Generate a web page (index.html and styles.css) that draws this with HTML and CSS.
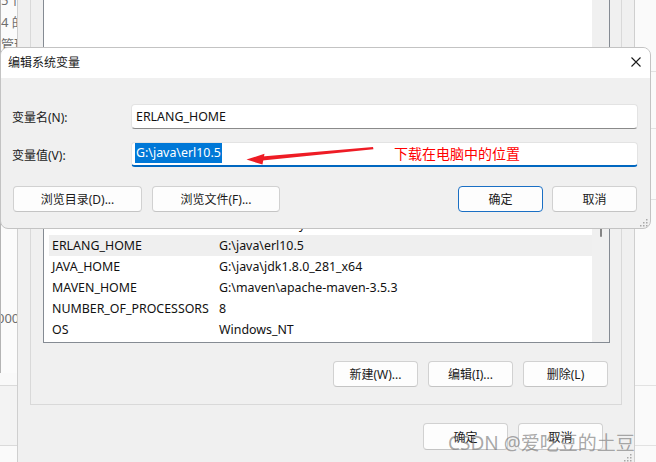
FILE: index.html
```html
<!DOCTYPE html>
<html lang="zh-CN">
<head>
    <meta charset="UTF-8">
    <meta name="viewport" content="width=device-width, initial-scale=1.0">
    <title>编辑系统变量</title>
    <link rel="stylesheet" href="styles.css">
</head>
<body>
    <div class="desk">
        <!-- Janela de trás, à esquerda -->
        <div class="side-left">
            <div class="frag-box">
                <div class="frag">5个</div>
                <div class="frag">4 的</div>
                <div class="frag">管理</div>
                <div class="frag frag-num">000</div>
            </div>
            <div class="band"></div>
            <div class="band band-mid"></div>
        </div>

        <!-- Janela 环境变量 -->
        <div class="envwin">
            <div class="group">
                <div class="varlist">
                    <div class="rows">
                        <div class="row"><span>DriverData</span><span>C:\Windows\System32\Drivers\DriverData</span></div>
                        <div class="row hot"><span>ERLANG_HOME</span><span>G:\java\erl10.5</span></div>
                        <div class="row"><span>JAVA_HOME</span><span>G:\java\jdk1.8.0_281_x64</span></div>
                        <div class="row"><span>MAVEN_HOME</span><span>G:\maven\apache-maven-3.5.3</span></div>
                        <div class="row"><span>NUMBER_OF_PROCESSORS</span><span>8</span></div>
                        <div class="row"><span>OS</span><span>Windows_NT</span></div>
                    </div>
                    <div class="vscroll"><div class="thumb"></div></div>
                </div>
                <div class="btn-row">
                    <button class="btn">新建(W)...</button>
                    <button class="btn">编辑(I)...</button>
                    <button class="btn">删除(L)</button>
                </div>
            </div>
            <div class="foot-row">
                <button class="btn tall">确定</button>
                <button class="btn tall">取消</button>
            </div>
            <svg class="env-grip" width="9" height="9" viewBox="0 0 9 9">
                <rect x="7" y="1" width="1.5" height="1.5"/>
                <rect x="7" y="4" width="1.5" height="1.5"/>
                <rect x="4" y="4" width="1.5" height="1.5"/>
                <rect x="7" y="7" width="1.5" height="1.5"/>
                <rect x="4" y="7" width="1.5" height="1.5"/>
                <rect x="1" y="7" width="1.5" height="1.5"/>
            </svg>
        </div>

        <!-- Janela de trás, à direita -->
        <div class="side-right">
            <div class="seg seg1"></div>
            <div class="seg seg2"></div>
            <div class="seg seg3"></div>
            <div class="seg seg4"></div>
            <div class="seg seg5"></div>
        </div>

        <!-- Diálogo 编辑系统变量 -->
        <div class="dialog">
            <div class="titlebar">
                <span class="title">编辑系统变量</span>
                <svg class="close" width="10" height="10" viewBox="0 0 10 10">
                    <path d="M0.5 0.5 L9.5 9.5 M9.5 0.5 L0.5 9.5" stroke="#1a1a1a" stroke-width="1.1" fill="none"/>
                </svg>
            </div>
            <div class="dlg-body">
                <div class="field">
                    <label>变量名(N):</label>
                    <div class="input">ERLANG_HOME</div>
                </div>
                <div class="field">
                    <label>变量值(V):</label>
                    <div class="input focus"><span class="sel">G:\java\erl10.5</span></div>
                </div>
                <div class="dlg-buttons">
                    <button class="btn wide">浏览目录(D)...</button>
                    <button class="btn wide">浏览文件(F)...</button>
                    <div class="spacer"></div>
                    <button class="btn default">确定</button>
                    <button class="btn">取消</button>
                </div>
            </div>
            <svg class="dlg-grip" width="9" height="9" viewBox="0 0 9 9">
                <rect x="7" y="1" width="1.5" height="1.5"/>
                <rect x="7" y="4" width="1.5" height="1.5"/>
                <rect x="4" y="4" width="1.5" height="1.5"/>
                <rect x="7" y="7" width="1.5" height="1.5"/>
                <rect x="4" y="7" width="1.5" height="1.5"/>
                <rect x="1" y="7" width="1.5" height="1.5"/>
            </svg>
        </div>

        <!-- Anotação vermelha -->
        <svg class="arrow" width="656" height="462" viewBox="0 0 656 462">
            <polygon points="262,156.6 373,146.9 373.4,149.3 262.4,160.4" fill="#ee1c25"/>
            <polygon points="246.5,159.6 264.5,153.8 262.5,164.6" fill="#ee1c25"/>
        </svg>
        <div class="note">下载在电脑中的位置</div>

        <div class="watermark">CSDN @爱吃豆的土豆</div>
    </div>
</body>
</html>
```

FILE: styles.css
```css
* { margin: 0; padding: 0; box-sizing: border-box; }
body {
    width: 656px;
    height: 462px;
    overflow: hidden;
    background-color: #fafafa;
    font-family: "Noto Sans", "Noto Sans CJK SC", sans-serif;
    font-size: 12px;
    color: #1a1a1a;
}
.desk {
    position: relative;
    display: flex;
    height: 462px;
    overflow: hidden;
}

/* janela de trás, esquerda */
.side-left {
    width: 17px;
    flex: none;
    display: flex;
    flex-direction: column;
    overflow: hidden;
}
.frag-box {
    height: 373px;
    border-left: 1px solid #b4b4b4;
    background-color: #fbfbfb;
    color: #6e6e6e;
    font-size: 13px;
    line-height: 22px;
    white-space: nowrap;
    overflow: hidden;
}
.frag:first-child { margin-top: -11px; }
.frag-num { margin-top: 252px; margin-left: -4px; }
.band {
    height: 13px;
    background-color: #f9f9f9;
    border-bottom: 1px solid #dadada;
}
.band-mid {
    height: 60px;
    background-color: #f3f3f3;
}

/* janela 环境变量 */
.envwin {
    position: relative;
    width: 618px;
    flex: none;
    background-color: #f0f0f0;
    border-left: 1px solid #cfcfcf;
    border-right: 1px solid #cfcfcf;
    padding: 0 12px;
}
.group {
    margin-top: -2px;
    border: 1px solid #d9d9d9;
    padding: 0 11px 0 12px;
}
.varlist {
    height: 344px;
    border: 1px solid #858b93;
    background-color: #fff;
    display: flex;
}
.rows {
    flex: 1;
    padding: 0 0 2px 5px;
    display: flex;
    flex-direction: column;
    justify-content: flex-end;
}
.row {
    display: grid;
    grid-template-columns: 167px 1fr;
    height: 21px;
    line-height: 21px;
    padding-left: 3px;
    font-size: 12.4px;
    color: #111;
    white-space: nowrap;
    overflow: hidden;
}
.row.hot { background-color: #efefef; }
.vscroll {
    width: 17px;
    background-color: #f0f0f0;
    display: flex;
    flex-direction: column;
    justify-content: flex-end;
    align-items: center;
    padding-bottom: 105px;
}
.thumb {
    width: 2px;
    height: 60px;
    background-color: #858585;
    border-radius: 1px;
}
.btn-row {
    display: flex;
    justify-content: flex-end;
    gap: 10px;
    padding: 18px 2px 17px 0;
}
.foot-row {
    display: flex;
    justify-content: flex-end;
    gap: 10px;
    padding: 18px 19px 0 0;
}
.env-grip {
    position: absolute;
    right: 2px;
    bottom: 0;
    fill: #a8a8a8;
}

/* janela de trás, direita */
.side-right {
    flex: 1;
    display: flex;
    flex-direction: column;
}
.seg { border-bottom: 1px solid #e2e2e2; }
.seg1 { height: 72px; }
.seg2 { height: 57px; }
.seg3 { height: 71px; }
.seg4 { height: 186px; }
.seg5 { height: 60px; }

/* botões */
.btn {
    width: 85px;
    height: 26px;
    background-color: #fdfdfd;
    border: 1px solid #d1d1d1;
    border-bottom-color: #c4c4c4;
    border-radius: 4px;
    font-family: inherit;
    font-size: 12px;
    color: #1a1a1a;
}
.btn.tall { height: 27px; }
.btn.wide { width: 129px; }
.btn.default { border-color: #1a6fc4; }

/* diálogo */
.dialog {
    position: absolute;
    left: 0;
    top: 47px;
    width: 651px;
    height: 182px;
    border: 1px solid #c3c3c3;
    border-radius: 8px;
    background-color: #f0f0f0;
    overflow: hidden;
}
.titlebar {
    height: 30px;
    background-color: #fff;
    display: flex;
    align-items: center;
    justify-content: space-between;
    padding: 0 9px 2px 7px;
}
.dlg-body { padding: 26px 12px 0 11px; }
.field {
    display: flex;
    align-items: center;
    height: 25px;
}
.field + .field { margin-top: 13px; }
.field label { width: 119px; }
.input {
    flex: 1;
    height: 25px;
    background-color: #fff;
    border: 1px solid #e3e3e3;
    border-bottom-color: #8a8a8a;
    border-radius: 4px;
    padding: 0 4px;
    line-height: 23px;
    font-size: 12.4px;
    color: #111;
}
.input.focus {
    border-bottom: 2px solid #0067c0;
    padding: 0 3px;
    line-height: 20px;
}
.sel {
    display: inline-block;
    height: 20px;
    line-height: 20px;
    padding: 0 1px;
    background-color: #0078d7;
    color: #fff;
}
.dlg-buttons {
    display: flex;
    gap: 10px;
    margin-top: 19px;
    padding: 0 1px;
}
.dlg-buttons .wide + .wide { width: 128px; }
.dlg-buttons .default + .btn { margin-left: -1px; }
.spacer { flex: 1; }
.dlg-grip {
    position: absolute;
    right: 2px;
    bottom: 1px;
    fill: #a8a8a8;
}

/* anotações */
.arrow {
    position: absolute;
    left: 0;
    top: 0;
    pointer-events: none;
}
.note {
    position: absolute;
    left: 394px;
    top: 143px;
    font-family: "Noto Sans CJK SC", sans-serif;
    font-size: 14px;
    line-height: 20px;
    color: #ff0000;
}
.watermark {
    position: absolute;
    left: 448px;
    top: 431px;
    font-size: 19px;
    line-height: 24px;
    color: rgba(120, 120, 120, 0.65);
    white-space: nowrap;
}
```
